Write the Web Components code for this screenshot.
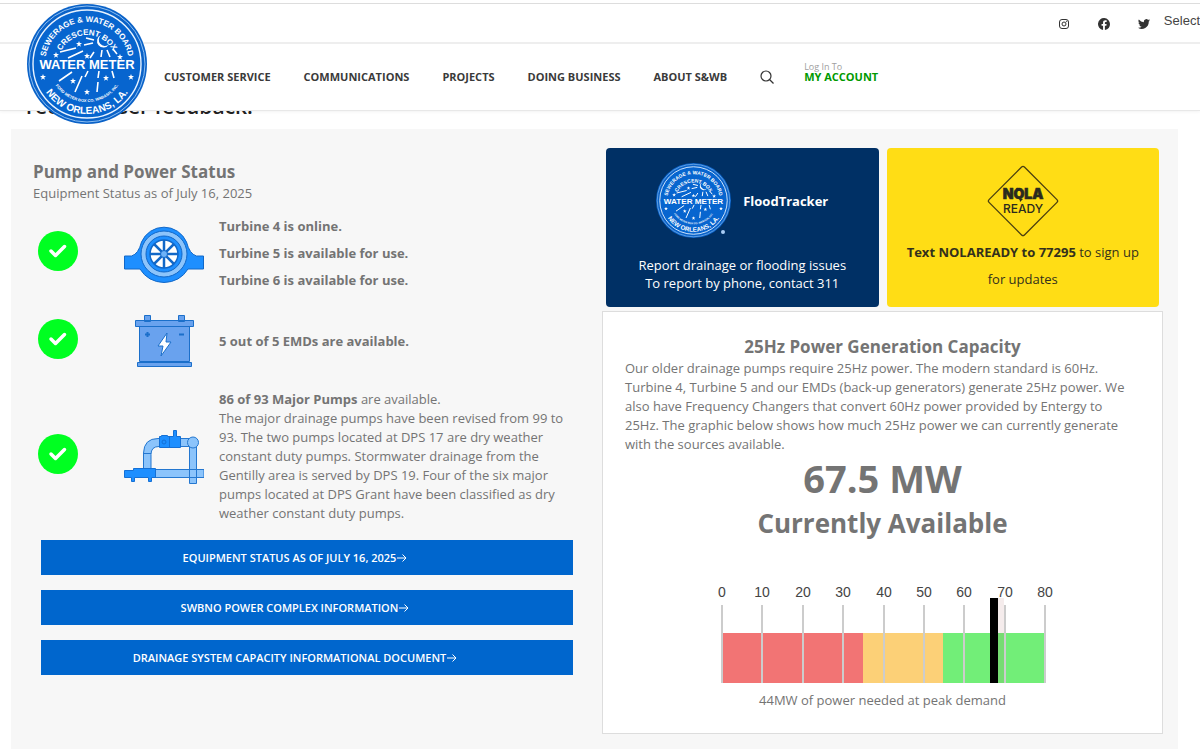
<!DOCTYPE html>
<html lang="en">
<head>
<meta charset="utf-8">
<title>Sewerage &amp; Water Board of New Orleans – Pump and Power Status</title>
<style>
  body { margin: 0; background: #fff; color: #747474; font: 13px/19px "Open Sans", "Noto Sans", sans-serif; }
</style>
</head>
<body>
<swb-header></swb-header>
<swb-dashboard></swb-dashboard>

<script>
const define = (name, html, setup) => customElements.define(name, class extends HTMLElement {
  constructor() {
    super();
    const t = document.createElement('template');
    t.innerHTML = html;
    this.attachShadow({ mode: 'open' }).append(t.content.cloneNode(true));
  }
  connectedCallback() { if (setup) setup(this, this.shadowRoot); }
});

/* Round water meter seal; scales with its host */
const star = (x, y) => `<use href="#s" x="${x}" y="${y}"/>`;
define('swb-seal', `
<style>
  :host { display: block; width: 120px; height: 120px; }
  svg { display: block; width: 100%; height: 100%; overflow: visible; }
  text { font-family: "Liberation Sans", Arial, sans-serif; font-weight: 700; fill: #fff; text-anchor: middle; }
</style>
<svg viewBox="0 0 120 120" role="img" aria-label="Sewerage and Water Board seal">
  <defs>
    <path id="s" d="M0-3 .8-.9 3-.9 1.2.5 1.9 2.7 0 1.4-1.9 2.7-1.2.5-3-.9-.8-.9z" fill="#fff"/>
    <path id="a" d="M18 60A42 42 0 0 1 102 60"/>
    <path id="b" d="M31 60A29 29 0 0 1 89 60"/>
    <path id="c" d="M10 60A50 50 0 0 0 110 60"/>
    <path id="d" d="M22 60A38 38 0 0 0 98 60"/>
  </defs>
  <circle cx="60" cy="60" r="60" fill="#0a62c8"/>
  <circle cx="60" cy="60" r="58" fill="none" stroke="#8fc0f2"/>
  <circle cx="60" cy="60" r="54" fill="#0765cf" stroke="#e8f3ff" stroke-width="1.400"/>
  <path stroke="#fff" stroke-width="1.600" fill="none" d="M33 48 49 44M41 54 56 47M57 41 66 39M59 34 67 36M67 48 63 54M75 46 74 53M80 46 83 53M86 45 90 50M45 68 32 77M55 72 48 88M61 67 58 73M72 67 71 74M71 78 70 88M85 67 87 74"/>
  <path d="M74 31a6.500 6.500 0 1 0 8 9.500A6 6 0 0 1 74 31z" fill="#fff"/>
  ${[[29,51],[52,40],[60,52],[93,53],[16,73],[46,77],[79,74],[104,73],[60,88]].map(p => star(...p)).join('')}
  <text font-size="8"><textPath href="#a" startOffset="50%">SEWERAGE &amp; WATER BOARD</textPath></text>
  <text font-size="8"><textPath href="#b" startOffset="50%">CRESCENT BOX</textPath></text>
  <text font-size="13" x="60" y="65">WATER METER</text>
  <text font-size="4"><textPath href="#d" startOffset="50%">FORD METER BOX CO. WABASH, INC.</textPath></text>
  <text font-size="10"><textPath href="#c" startOffset="50%">NEW ORLEANS, LA.</textPath></text>
</svg>`);

define('swb-header', `
<style>
  :host { display: block; position: sticky; top: 0; z-index: 2; background: #fff; padding-top: 3px; border-bottom: 1px solid #e8e8e8; box-shadow: 0 1px 3px #0000000d; }
  a { color: #3a3a3a; text-decoration: none; }
  .social { display: flex; justify-content: flex-end; align-items: center; height: 38px; border-top: 1px solid #ddd; border-bottom: 2px solid #eee; overflow: hidden; }
  .social svg { display: block; width: 12px; height: 12px; margin-right: 28px; margin-top: 2px; }
  .social a:nth-of-type(3) svg { margin-right: 14px; }
  .lang { font: 13px/18px "Liberation Sans", Arial, sans-serif; color: #444; margin-bottom: 4px; }
  nav { display: flex; align-items: center; gap: 33px; height: 66px; padding-left: 164px; font-size: 11px; line-height: 18px; font-weight: 700; white-space: nowrap; }
  nav > button { border: 0; background: none; padding: 0; }
  nav button svg { display: block; width: 14px; height: 14px; }
  .account { display: flex; flex-direction: column; color: #090; line-height: 12px; margin: 0 0 10px -3px; }
  .account small { font-size: 9px; line-height: 9px; font-weight: 400; color: #a0a0a0; }
  .logo { position: absolute; left: 27px; top: 4px; }
</style>
<div class="social">
  <a href="#" aria-label="Instagram"><svg viewBox="0 0 12 12" fill="none" stroke="#333"><rect x="1.500" y="1.500" width="9" height="9" rx="2.500"/><circle cx="6" cy="6" r="2"/><circle cx="8.600" cy="3.400" r=".3"/></svg></a>
  <a href="#" aria-label="Facebook"><svg viewBox="0 0 24 24" fill="#333"><path d="M24 12A12 12 0 1 0 10.100 23.900v-8.400H7.100V12h3V9.400c0-3 1.800-4.700 4.500-4.700 1.300 0 2.700.2 2.700.2v3h-1.500c-1.500 0-2 .9-2 1.900V12h3.400l-.5 3.500h-2.900v8.400A12 12 0 0 0 24 12z"/></svg></a>
  <a href="#" aria-label="Twitter"><svg viewBox="0 0 24 24" fill="#333"><path d="M24 4.600a10 10 0 0 1-2.800.8 5 5 0 0 0 2.200-2.700 10 10 0 0 1-3.100 1.200 4.900 4.900 0 0 0-8.400 4.500A14 14 0 0 1 1.700 3.100a4.900 4.900 0 0 0 1.500 6.600 5 5 0 0 1-2.200-.6 4.900 4.900 0 0 0 3.900 4.900 5 5 0 0 1-2.200.1 4.900 4.900 0 0 0 4.600 3.400A10 10 0 0 1 0 19.500a14 14 0 0 0 21.500-12.400A10 10 0 0 0 24 4.600z"/></svg></a>
  <a class="lang" href="#">Select</a>
</div>
<nav aria-label="Main">
  <a href="#">CUSTOMER SERVICE</a><a href="#">COMMUNICATIONS</a><a href="#">PROJECTS</a><a href="#">DOING BUSINESS</a><a href="#">ABOUT S&amp;WB</a>
  <button aria-label="Search"><svg viewBox="0 0 14 14" fill="none" stroke="#333" stroke-width="1.200"><circle cx="6" cy="6" r="5"/><path d="m9.500 9.500 4 4"/></svg></button>
  <a class="account" href="#"><small>Log In To</small>MY ACCOUNT</a>
</nav>
<a class="logo" href="#" aria-label="Home"><swb-seal></swb-seal></a>`);

define('status-row', `
<style>
  :host { display: grid; grid-template-columns: 91px 80px 1fr; align-items: center; }
  .ok { display: block; width: 40px; height: 40px; margin: 0 0 5px 5px; }
  .text { padding-left: 15px; }
  ::slotted(svg) { display: block; }
</style>
<svg class="ok" viewBox="0 0 40 40" role="img" aria-label="OK"><circle cx="20" cy="20" r="20" fill="#00ff21"/><path d="m13 20 4.500 4.500 9-9" fill="none" stroke="#fff" stroke-width="3.500" stroke-linecap="round" stroke-linejoin="round"/></svg>
<slot name="icon"></slot>
<div class="text"><slot></slot></div>`);

define('action-link', `
<style>
  :host { display: block; }
  a { display: flex; align-items: center; justify-content: center; gap: 1px; box-sizing: border-box; height: 35px; padding-right: 24px; background: #0066cd; color: #fff; text-decoration: none; font-size: 11px; line-height: 16px; font-weight: 600; }
  svg { width: 10px; height: 10px; }
</style>
<a href="#"><slot></slot><svg viewBox="0 0 10 10" fill="none" stroke="#fff"><path d="M0 5h9M5.500 1.500 9 5 5.500 8.500"/></svg></a>`);

define('info-tile', `
<style>
  :host { display: flex; flex-direction: column; align-items: center; box-sizing: border-box; min-height: 159px; padding: 15px 12px 12px; border-radius: 4px; text-align: center; }
</style>
<slot></slot>`);

define('power-gauge', `
<style>
  :host { display: block; }
  svg { display: block; width: 360px; max-width: 100%; margin: 0 auto; }
  text { font: 14px "Liberation Sans", Arial, sans-serif; fill: #444; text-anchor: middle; }
</style>
<svg viewBox="0 0 360 104" role="img" aria-label="Power gauge, 67.5 of 80 megawatts">
  <g id="labels"></g>
  <path d="M18 54h142v50H18z" fill="#f27474"/><path d="M160 54h80v50h-80z" fill="#fcd077"/><path d="M240 54h102v50H240z" fill="#72ee78"/>
  <g id="ticks" fill="#ccc"></g>
  <path d="M295 19h6v85h-6z" fill="#a04040" opacity=".1"/>
  <path d="M287 19h8v85h-8z"/>
</svg>`, (el, root) => {
  const x = i => Math.round(19 + i * 323 / 8);
  const n = [0, 10, 20, 30, 40, 50, 60, 70, 80];
  root.getElementById('labels').innerHTML = n.map((v, i) => `<text x="${x(i)}" y="18">${v}</text>`).join('');
  root.getElementById('ticks').innerHTML = n.map((v, i) => `<rect x="${x(i) - 1}" y="26" width="2" height="78"/>`).join('');
});

define('swb-dashboard', `
<style>
  :host { display: block; }
  h1, h2, p { margin: 0; }
  .lead { margin: -19px 26px 9px; font-size: 21px; line-height: 28px; font-weight: 600; color: #222; }
  main { display: grid; grid-template-columns: 540fr 561fr; column-gap: 29px; margin: 0 22px 6px 11px; padding: 19px 15px 15px 22px; background: #f7f7f7; }
  h2 { font-size: 17px; line-height: 24px; font-weight: 700; }
  .left { padding-top: 12px; }
  .turbines { line-height: 27px; font-weight: 700; margin-top: 10px; }
  .emd { font-weight: 700; margin: 21px 0 23px; }
  .links { display: grid; gap: 15px; margin: 17px 0 0 8px; }
  .tiles { display: grid; grid-template-columns: 1fr 1fr; gap: 8px; padding: 0 4px; margin-bottom: 4px; }
  .flood { background: #003065; color: #fff; line-height: 18px; }
  .brand { display: flex; align-items: center; gap: 12px; margin-bottom: 18px; font-weight: 700; }
  .brand swb-seal { width: 75px; height: 75px; position: relative; }
  .mark { position: relative; }
  .mark::after { content: ""; position: absolute; right: 6px; bottom: 4px; width: 4px; height: 4px; border-radius: 50%; background: #a9cdf5; }
  .nola { background: #ffdd15; color: #33301c; line-height: 27px; }
  .card { background: #fff; border: 1px solid #ddd; padding: 23px 28px 23px 22px; text-align: center; }
  .card > * { margin-right: -6px; }
  .card .about { text-align: left; margin-right: 0; }
  .big { font-size: 38px; line-height: 48px; font-weight: 700; }
  .avail { font-size: 26px; line-height: 42px; font-weight: 700; }
  power-gauge { margin-top: 35px; margin-bottom: 8px; }
  svg { display: block; }
</style>
<h1 class="lead">receive user feedback.</h1>
<main>
  <section class="left">
    <h2>Pump and Power Status</h2>
    <p>Equipment Status as of July 16, 2025</p>
    <status-row class="turbines">
      <svg slot="icon" width="80" height="58" viewBox="0 0 80 58" stroke="#1268c8"><path d="M.5 31h7q7-2 10-14a24.500 24.500 0 0 1 45 0q3 12 10 14h7v13H64q-8 13-24 13.500Q24 57 16 44H.5z" fill="#1e8fff"/><circle cx="40" cy="29" r="23" fill="#8cc4fb"/><circle cx="40" cy="29" r="18" fill="#1e8fff"/><circle cx="40" cy="29" r="14" fill="#fff" stroke-width="1.500"/><path d="M40 15v28M26 29h28M30 19l20 20M50 19 30 39" stroke-width="2.500"/><circle cx="40" cy="29" r="3.500" fill="#6db2f8"/></svg>
      <div>Turbine 4 is online.</div><div>Turbine 5 is available for use.</div><div>Turbine 6 is available for use.</div>
    </status-row>
    <status-row class="emd">
      <svg slot="icon" width="80" height="52" viewBox="0 0 80 52" fill="#69a2ee" stroke="#1b6fca"><path d="M20.500.5h6v6h-6zM54.500.5h6v6h-6zM15.500 11.500h50v35h-50zM11.500 5.500h58v6h-58zM13.500 47.500h54v4h-54z"/><path d="M21 19.500h5M23.500 17v5M55 19.500h5" stroke-width="2"/><path d="m43 18-9 13h5l-2 10 10-14h-5z" fill="#fff"/></svg>
      5 out of 5 EMDs are available.
    </status-row>
    <status-row>
      <svg slot="icon" width="80" height="54" viewBox="0 0 80 54" fill="#8cc4fb" stroke="#2477d0"><path d="M65.500 14h7v39.500h-7zM19.500 39V23Q20 8.500 34 8.500h32v8H35q-8 0-8 8V39zM30 39.500h50v8H30zM19.500 23.500h7.500"/><circle cx="69" cy="12.500" r="5.500"/><g fill="#1e8fff" stroke="#1470d6"><path d="M35.500 6.500h2v-1h6v1h6V.5h3v6h4v11h-21zM45.500 7v10M.5 40.500h9v-2h22v9h-4v4h-3v-4h-14v4h-3v-4h-7z"/><circle cx="40" cy="12" r="2"/></g></svg>
      <div><b>86 of 93 Major Pumps</b> are available.</div>
      <div>The major drainage pumps have been revised from 99 to 93. The two pumps located at DPS 17 are dry weather constant duty pumps. Stormwater drainage from the Gentilly area is served by DPS 19. Four of the six major pumps located at DPS Grant have been classified as dry weather constant duty pumps.</div>
    </status-row>
    <div class="links">
      <action-link>EQUIPMENT STATUS AS OF JULY 16, 2025</action-link>
      <action-link>SWBNO POWER COMPLEX INFORMATION</action-link>
      <action-link>DRAINAGE SYSTEM CAPACITY INFORMATIONAL DOCUMENT</action-link>
    </div>
  </section>
  <section>
    <div class="tiles">
      <info-tile class="flood">
        <div class="brand"><span class="mark"><swb-seal></swb-seal></span>FloodTracker</div>
        <div>Report drainage or flooding issues</div><div>To report by phone, contact 311</div>
      </info-tile>
      <info-tile class="nola">
        <svg width="76" height="76" viewBox="0 0 76 76" role="img" aria-label="NOLA Ready"><rect x="13" y="13" width="50" height="50" rx="2" transform="rotate(45 38 38)" fill="none" stroke="#4a3f10" stroke-width="1.300"/><g fill="#2b2a1e" text-anchor="middle" font-family="Inter, sans-serif"><text x="38" y="36" font-weight="900" font-size="14" stroke="#2b2a1e" stroke-width=".6">NOLA</text><text x="38" y="50" font-size="12" font-weight="500">READY</text></g><path d="M31 25q3-1 5 2l-3 1zM38 36l-3 3q0-2-1-3z" fill="#2b2a1e"/></svg>
        <div><b>Text NOLAREADY to 77295</b> to sign up<br>for updates</div>
      </info-tile>
    </div>
    <div class="card">
      <h2>25Hz Power Generation Capacity</h2>
      <p class="about">Our older drainage pumps require 25Hz power. The modern standard is 60Hz. Turbine 4, Turbine 5 and our EMDs (back-up generators) generate 25Hz power. We also have Frequency Changers that convert 60Hz power provided by Entergy to 25Hz. The graphic below shows how much 25Hz power we can currently generate with the sources available.</p>
      <p class="big">67.5 MW</p>
      <p class="avail">Currently Available</p>
      <power-gauge></power-gauge>
      <p>44MW of power needed at peak demand</p>
    </div>
  </section>
</main>`);
</script>
</body>
</html>
